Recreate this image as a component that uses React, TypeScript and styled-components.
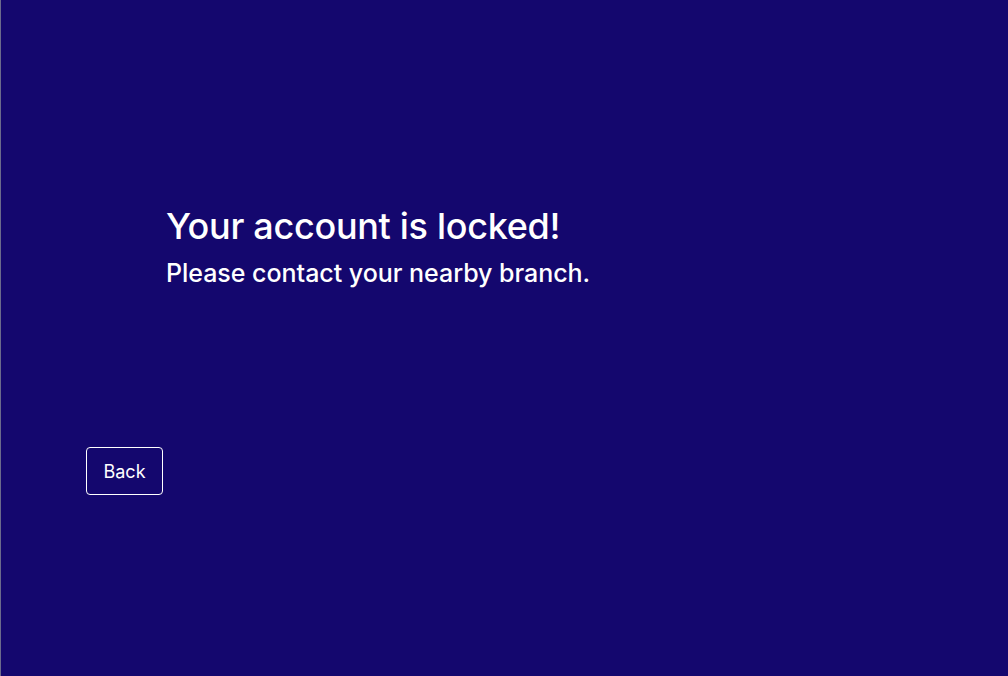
import React from 'react';
import styled, { createGlobalStyle } from 'styled-components';

const GlobalStyle = createGlobalStyle`
  html, body {
    margin: 0;
    padding: 0;
    height: 100%;
  }
  body {
    font-family: Inter, "Noto Sans", sans-serif;
    background: #14076e;
  }
  #root {
    height: 100%;
  }
`;

const Screen = styled.div`
  box-sizing: border-box;
  width: 100%;
  height: 676px;
  background: #14076e;
  border-left: 1px solid #6b6a8c;
  color: #ffffff;
  display: flex;
  flex-direction: column;
`;

const Message = styled.div`
  padding: 204px 0 0 165px;
  display: flex;
  flex-direction: column;
  gap: 10px;
`;

const Title = styled.h1`
  margin: 0;
  font-size: 36px;
  font-weight: 500;
  line-height: 44px;
  letter-spacing: -0.3px;
`;

const Subtitle = styled.p`
  margin: 0;
  font-size: 25px;
  font-weight: 500;
  line-height: 30px;
  letter-spacing: -0.03px;
`;

const Actions = styled.div`
  padding: 159px 0 0 85px;
`;

const BackButton = styled.button`
  box-sizing: border-box;
  width: 77px;
  height: 48px;
  border: 1px solid #ffffff;
  border-radius: 4px;
  background: transparent;
  color: #ffffff;
  font-family: Inter, "Noto Sans", sans-serif;
  font-size: 18px;
  font-weight: 400;
  cursor: pointer;
`;

export default function App() {
  return (
    <>
      <GlobalStyle />
      <Screen>
        <Message>
          <Title>Your account is locked!</Title>
          <Subtitle>Please contact your nearby branch.</Subtitle>
        </Message>
        <Actions>
          <BackButton>Back</BackButton>
        </Actions>
      </Screen>
    </>
  );
}
